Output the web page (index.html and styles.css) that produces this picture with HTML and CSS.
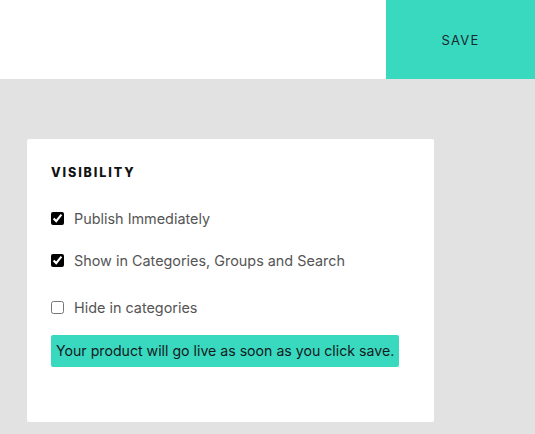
FILE: index.html
```html
<!DOCTYPE html>
<html>
<head>
<meta charset="utf-8">
<link rel="stylesheet" href="styles.css">
</head>
<body>
<header class="topbar">
  <button class="save-btn">SAVE</button>
</header>
<main class="content">
  <section class="card">
    <h2 class="card-title">VISIBILITY</h2>
    <label class="opt opt-1"><input type="checkbox" checked><span>Publish Immediately</span></label>
    <label class="opt opt-2"><input type="checkbox" checked><span>Show in Categories, Groups and Search</span></label>
    <label class="opt opt-3"><input type="checkbox"><span>Hide in categories</span></label>
    <div class="notice">Your product will go live as soon as you click save.</div>
  </section>
</main>
</body>
</html>
```
FILE: styles.css
```css
* { box-sizing: border-box; }
html, body { margin: 0; padding: 0; }
body {
  width: 535px;
  height: 434px;
  overflow: hidden;
  background: #e2e2e2;
  font-family: Inter, "Noto Sans", "Liberation Sans", sans-serif;
}
.topbar {
  height: 79px;
  background: #ffffff;
  display: flex;
  justify-content: flex-end;
}
.save-btn {
  width: 149px;
  height: 79px;
  border: none;
  margin: 0;
  padding: 0;
  background: #38d9be;
  color: #1b2733;
  font-family: inherit;
  font-size: 13px;
  font-weight: 400;
  letter-spacing: 1.2px;
}
.content {
  padding: 60px 0 0 27px;
}
.card {
  width: 407px;
  height: 283px;
  background: #ffffff;
  border-radius: 2px;
  padding: 26px 24px 0 24px;
}
.card-title {
  margin: 0;
  font-size: 12.5px;
  line-height: 16px;
  font-weight: 800;
  letter-spacing: 1.9px;
  color: #111;
}
.opt {
  display: flex;
  align-items: center;
  gap: 10px;
  height: 20px;
  font-size: 14.4px;
  color: #555;
}
.opt input {
  margin: 0;
  width: 13px;
  height: 13px;
  accent-color: #000;
}
.opt-1 { margin-top: 27px; }
.opt-2 { margin-top: 22px; }
.opt-3 { margin-top: 27px; }
.notice {
  margin-top: 18px;
  display: inline-block;
  height: 32px;
  line-height: 32px;
  padding: 0 5px;
  background: #38d9be;
  color: #141a1f;
  font-size: 14.15px;
  border-radius: 2px;
}
```
